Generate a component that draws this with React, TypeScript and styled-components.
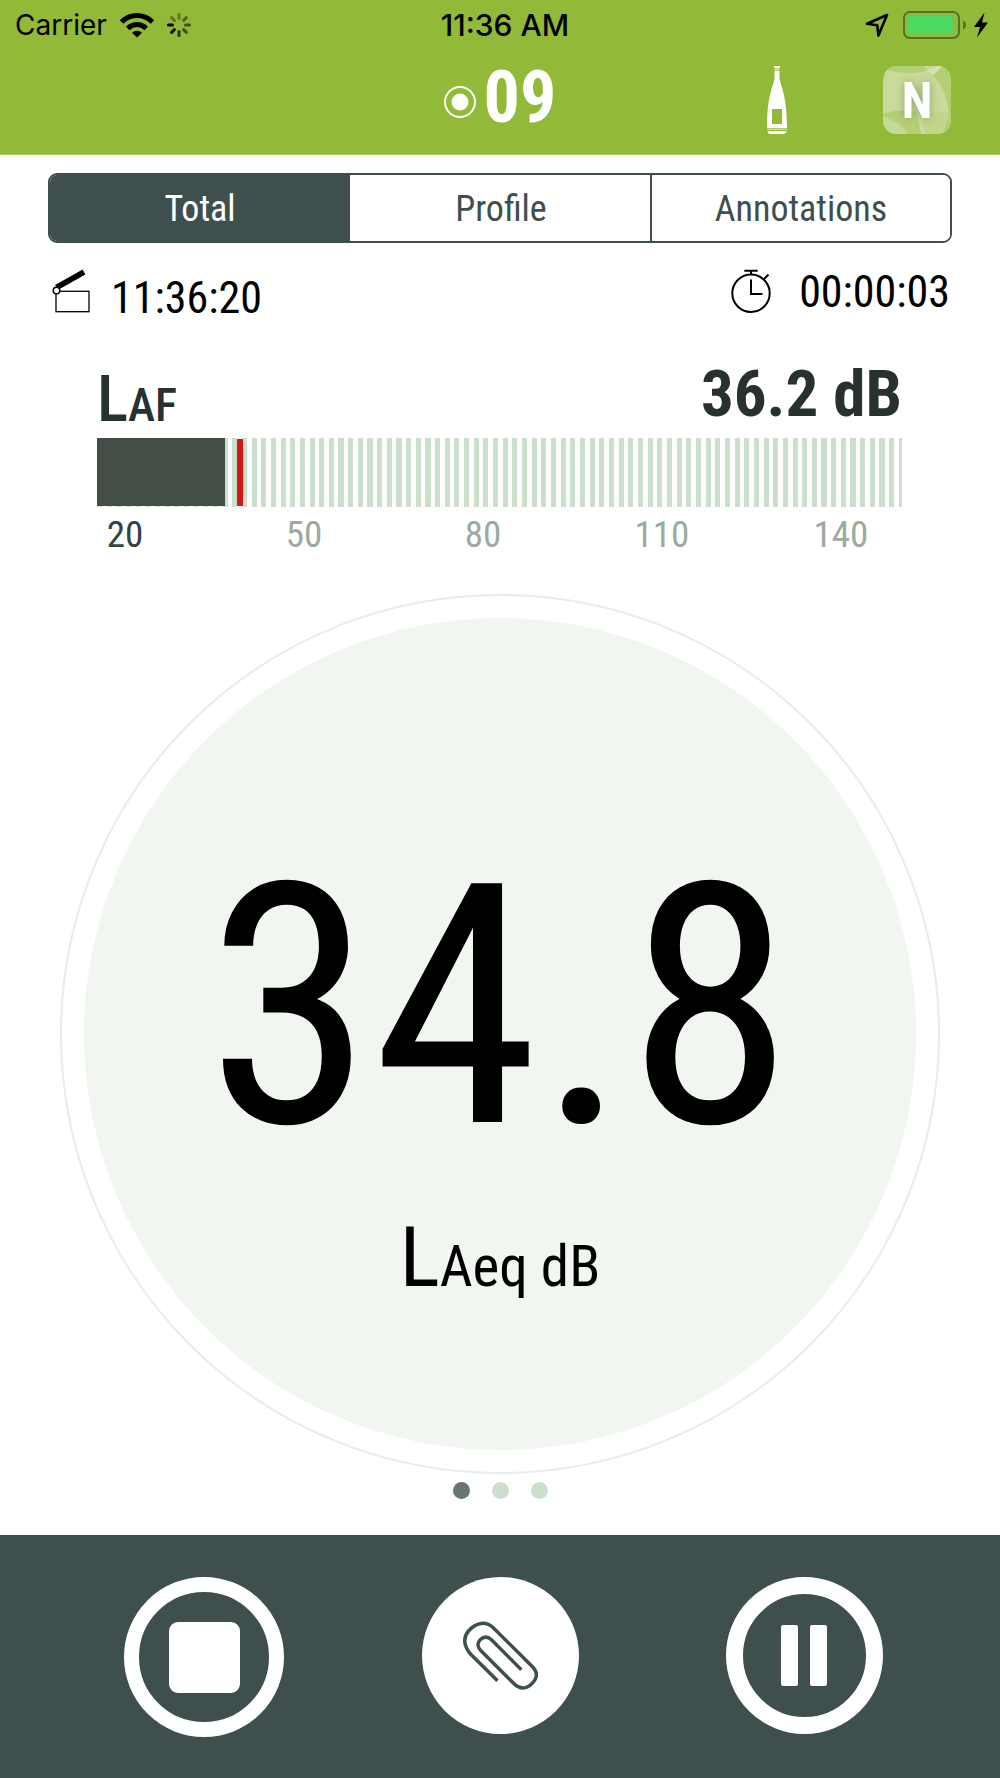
import React, { useState } from 'react';
import styled, { createGlobalStyle } from 'styled-components';

const green = '#92b938';
const slate = '#3f4f4e';
const ink = '#263130';
const display = "'Roboto Condensed', Roboto, sans-serif";
const system = "Inter, 'Liberation Sans', sans-serif";

const GlobalStyle = createGlobalStyle`
  * { box-sizing: border-box; }
  body { margin: 0; background: #fff; }
  button { margin: 0; padding: 0; border: 0; background: none; font: inherit; color: inherit; cursor: pointer; }
  svg { display: block; }
`;

const Screen = styled.div`
  min-height: 100vh;
  display: flex;
  flex-direction: column;
  font-family: ${display};
  color: #000;
`;

const TopArea = styled.header`
  background: ${green};
  border-bottom: 1px solid #acca67;
`;

const StatusBar = styled.div`
  display: grid;
  grid-template-columns: 1fr auto 1fr;
  align-items: center;
  height: 50px;
  padding: 0 11px 0 15px;
  font: 400 28px/50px ${system};
`;

const StatusGroup = styled.div<{ $end?: boolean; $gap: number }>`
  display: flex;
  align-items: center;
  gap: ${p => p.$gap}px;
  justify-content: ${p => (p.$end ? 'flex-end' : 'flex-start')};
`;

const Clock = styled.time`
  padding-left: 6px;
  font-size: 30px;
  font-weight: 500;
`;

const TitleBar = styled.div`
  display: grid;
  grid-template-columns: 1fr auto 1fr;
  height: 104px;
  padding: 0 49px;
`;

const Title = styled.h1`
  grid-column: 2;
  display: flex;
  gap: 8px;
  margin: 0;
  padding-top: 12px;
  color: #fff;
  font-size: 72px;
  font-weight: 700;
  line-height: 72px;
  svg { margin-top: 24px; }
`;

const Actions = styled.div`
  display: flex;
  justify-content: flex-end;
  align-items: flex-start;
  gap: 96px;
  padding-top: 16px;
`;

const AppBadge = styled.button`
  position: relative;
  width: 68px;
  height: 68px;
  border-radius: 13px;
  overflow: hidden;
  svg { position: absolute; inset: 0; }
  span {
    position: relative;
    color: #fff;
    font-size: 50px;
    font-weight: 700;
    line-height: 70px;
    text-shadow: 0 0 8px rgba(80, 100, 50, 0.45);
  }
`;

const Main = styled.main`
  flex: 1;
  padding-top: 18px;
`;

const Tabs = styled.div`
  display: grid;
  grid-template-columns: repeat(3, 1fr);
  margin: 0 48px;
  height: 70px;
  border: 2px solid ${slate};
  border-radius: 9px;
  overflow: hidden;
`;

const Tab = styled.button<{ $active: boolean }>`
  padding-top: 2px;
  background: ${p => (p.$active ? slate : '#fff')};
  color: ${p => (p.$active ? '#fff' : slate)};
  font-size: 36px;
  line-height: 64px;
  & + & { border-left: 2px solid ${slate}; }
  &[aria-selected='true'] + & { border-left-color: transparent; }
`;

const Times = styled.div`
  display: flex;
  justify-content: space-between;
  height: 52px;
  margin: 26px 50px 0 52px;
`;

const TimeItem = styled.div<{ $low?: boolean }>`
  display: flex;
  align-items: flex-start;
  gap: ${p => (p.$low ? 18 : 28)}px;
  time {
    align-self: ${p => (p.$low ? 'flex-end' : 'flex-start')};
    font-size: 44px;
    line-height: 46px;
  }
`;

const Level = styled.section`
  margin: 41px 98px 0 97px;
`;

const LevelHead = styled.div`
  display: flex;
  justify-content: space-between;
  height: 69px;
  margin-bottom: 7px;
  color: ${ink};
  font-size: 65px;
  line-height: 64px;
`;

const LevelName = styled.span`
  align-self: flex-end;
  font-weight: 500;
  small { font-size: 46px; line-height: 46px; }
`;

const Bar = styled.div`
  display: flex;
  height: 69px;
  background: repeating-linear-gradient(to right, #ccdfcd 0 0.63%, #fff 0.63% 1.2%);
`;

const Fill = styled.div`
  background: #434e47;
  height: 68px;
`;

const Peak = styled.div`
  width: 6px;
  margin: 1px 0 1px 12px;
  background: #ce1a17;
`;

const Scale = styled.div`
  display: flex;
  justify-content: space-between;
  margin-top: 8px;
  padding-right: 33px;
  font-size: 37px;
  line-height: 40px;
`;

const Tick = styled.span<{ $active: boolean }>`
  width: 56px;
  text-align: center;
  color: ${p => (p.$active ? '#36423f' : '#9bab9f')};
`;

const Ring = styled.section`
  width: 88%;
  aspect-ratio: 1;
  margin: 39px auto 0;
  padding: 22px;
  border: 2px solid #e2f0e9;
  border-radius: 50%;
`;

const Disc = styled.div`
  height: 100%;
  padding-top: 239px;
  border-radius: 50%;
  background: #f1f6f0;
  text-align: center;
`;

const Reading = styled.output`
  display: block;
  font-size: 336px;
  line-height: 300px;
`;

const Unit = styled.div`
  margin-top: 51px;
  font-size: 84px;
  line-height: 100px;
  small { font-size: 57px; line-height: 57px; }
`;

const Dots = styled.nav`
  display: flex;
  justify-content: center;
  gap: 22px;
  margin: 8px 0 36px;
`;

const Dot = styled.button<{ $active: boolean }>`
  width: 17px;
  height: 17px;
  border-radius: 50%;
  background: ${p => (p.$active ? '#68766d' : '#ccdfcd')};
`;

const Controls = styled.footer`
  display: grid;
  grid-template-columns: 302fr 290fr 318fr;
  justify-items: center;
  align-items: start;
  padding: 42px 37px 41px 53px;
  background: ${slate};
`;

const RoundButton = styled.button<{ $size: number; $ring?: number }>`
  display: flex;
  align-items: center;
  justify-content: center;
  gap: 12px;
  width: ${p => p.$size}px;
  height: ${p => p.$size}px;
  border: ${p => p.$ring ?? 0}px solid #fff;
  border-radius: 50%;
  background: ${p => (p.$ring ? 'transparent' : '#fff')};
`;

const StopMark = styled.span`
  width: 71px;
  height: 71px;
  border-radius: 9px;
  background: #fff;
`;

const PauseMark = styled.span`
  width: 17px;
  height: 61px;
  border-radius: 2px;
  background: #fff;
`;

const WifiIcon = () => (
  <svg width="34" height="25" viewBox="0 0 34 25" fill="none" stroke="#000" strokeWidth="5" aria-hidden="true">
    <path d="M1.6 9A21.5 21.5 0 0 1 32.4 9" />
    <path d="M7.8 15.4A13 13 0 0 1 26.2 15.4" />
    <path d="M17 24.5L12 19.7A7.2 7.2 0 0 1 22 19.7Z" fill="#000" stroke="none" />
  </svg>
);

const spokes = [0.35, 0.45, 0.55, 0.55, 0.7, 0.85, 1, 0.35];

const SpinnerIcon = () => (
  <svg width="24" height="24" viewBox="-12 -12 24 24" stroke="#000" strokeWidth="3" strokeLinecap="round" aria-hidden="true">
    {spokes.map((opacity, i) => (
      <line key={i} y1="-10.5" y2="-6.5" opacity={opacity} transform={`rotate(${i * 45})`} />
    ))}
  </svg>
);

const LocationIcon = () => (
  <svg width="24" height="24" viewBox="0 0 24 24" fill="none" stroke="#000" strokeWidth="2.6" strokeLinejoin="round" aria-hidden="true">
    <path d="M22 2L2 10.8L12.3 12.2L13.4 22.5Z" />
  </svg>
);

const BatteryIcon = () => (
  <svg width="64" height="28" viewBox="0 0 64 28" aria-hidden="true">
    <rect x="1" y="1" width="55" height="26" rx="6" fill="none" stroke="#56712a" strokeWidth="2" />
    <rect x="5" y="5" width="45" height="18" rx="2.5" fill="#4cd964" />
    <path d="M60 9.5Q63 11 63 14T60 18.5Z" fill="#56712a" />
  </svg>
);

const BoltIcon = () => (
  <svg width="16" height="26" viewBox="0 0 16 26" aria-hidden="true">
    <path d="M11.5 0.5L1 15H7L4 25.5L15 10.5H9Z" />
  </svg>
);

const RecordIcon = () => (
  <svg width="32" height="32" viewBox="0 0 32 32" aria-hidden="true">
    <circle cx="16" cy="16" r="15" fill="none" stroke="#fff" strokeWidth="2" />
    <circle cx="16" cy="16" r="8.5" fill="#fff" />
  </svg>
);

const BottleIcon = () => (
  <svg width="20" height="68" viewBox="0 0 20 68" fill="#fff" aria-hidden="true">
    <rect x="7" y="0" width="6" height="2" />
    <rect x="7.5" y="2.7" width="5" height="1" />
    <path fillRule="evenodd" d="M7.5 4.7H12.5V13C15 23 20 32 20 62.3H0C0 32 5 23 7.5 13ZM5 43V58H15V43Z" />
    <rect x="0.2" y="63" width="19.6" height="1" opacity="0.5" />
    <path d="M0.5 65H19.5Q19 68 17 68H3Q1 68 0.5 65Z" />
  </svg>
);

const FacetsIcon = () => (
  <svg width="68" height="68" viewBox="0 0 68 68" fill="#fff" aria-hidden="true">
    <rect width="68" height="68" opacity="0.3" />
    <path d="M4 4Q32 12 54 0H60L50 9Q66 28 66 50L60 68H38L34 48L27 68Q14 54 0 48V16Z" opacity="0.28" />
    <path d="M40 0H60L50 9Z" opacity="0.25" />
    <path d="M0 50Q16 56 25 68H0Z" opacity="0.25" />
    <path d="M0 48Q16 42 34 46L27 68Q18 56 0 48Z" fill={green} opacity="0.35" />
    <path d="M38 48L66 46Q66 58 59 68H42Z" fill={green} opacity="0.14" />
  </svg>
);

const ClapperIcon = () => (
  <svg width="41" height="44" viewBox="0 0 41 44" fill="none" stroke="#000" aria-hidden="true">
    <rect x="4" y="22.3" width="33" height="20.4" strokeWidth="1.3" />
    <path d="M4.5 18.5L32 3" strokeWidth="5.6" />
    <circle cx="4.5" cy="21.5" r="3.3" fill="#fff" strokeWidth="1.5" />
  </svg>
);

const StopwatchIcon = () => (
  <svg width="40" height="44" viewBox="0 0 40 44" fill="none" stroke="#000" strokeWidth="2" aria-hidden="true">
    <circle cx="20" cy="24.3" r="18.7" />
    <path d="M13.3 1.8H26.7M20 2V6M33 10L37.5 5.5M20 10.5V25H31.5" />
  </svg>
);

const PaperclipIcon = () => (
  <svg width="76" height="71" viewBox="0 0 76 71" fill="none" stroke={slate} strokeWidth="3.5" aria-hidden="true">
    <path d="M35.5 60.7L9 34.5C2 27 0.5 18 6.5 11C14 2.5 23.5 0.5 31.5 8L71 47.2C74.5 51 75.5 56 72.5 60.5C66 69.5 58.5 70 52.3 64L18.5 30.2C15 26.5 15.5 22.5 18.2 19.8C21.5 16.5 25.5 16 29.5 19.8L59.3 49.7" />
  </svg>
);

const views = ['Total', 'Profile', 'Annotations'];
const ticks = [20, 50, 80, 110, 140];
const pages = ['Page 1', 'Page 2', 'Page 3'];

export default function App() {
  const [view, setView] = useState(0);
  const [page, setPage] = useState(0);
  const level = 36.2;

  return (
    <Screen>
      <GlobalStyle />
      <TopArea>
        <StatusBar>
          <StatusGroup $gap={13}>
            <span>Carrier</span>
            <WifiIcon />
            <SpinnerIcon />
          </StatusGroup>
          <Clock>11:36 AM</Clock>
          <StatusGroup $end $gap={14}>
            <LocationIcon />
            <StatusGroup $gap={6}>
              <BatteryIcon />
              <BoltIcon />
            </StatusGroup>
          </StatusGroup>
        </StatusBar>
        <TitleBar>
          <Title><RecordIcon />09</Title>
          <Actions>
            <button type="button" aria-label="Bottle"><BottleIcon /></button>
            <AppBadge type="button"><FacetsIcon /><span>N</span></AppBadge>
          </Actions>
        </TitleBar>
      </TopArea>

      <Main>
        <Tabs role="tablist">
          {views.map((name, i) => (
            <Tab key={name} type="button" role="tab" aria-selected={view === i} $active={view === i} onClick={() => setView(i)}>
              {name}
            </Tab>
          ))}
        </Tabs>

        <Times>
          <TimeItem $low><ClapperIcon /><time>11:36:20</time></TimeItem>
          <TimeItem><StopwatchIcon /><time>00:00:03</time></TimeItem>
        </Times>

        <Level>
          <LevelHead>
            <LevelName>L<small>AF</small></LevelName>
            <strong>{level} dB</strong>
          </LevelHead>
          <Bar role="meter" aria-label="Sound level" aria-valuemin={15} aria-valuemax={150} aria-valuenow={level}>
            <Fill style={{ width: `${((level - 14.8) / 135) * 100}%` }} />
            <Peak />
          </Bar>
          <Scale>
            {ticks.map(t => <Tick key={t} $active={t <= level}>{t}</Tick>)}
          </Scale>
        </Level>

        <Ring>
          <Disc>
            <Reading>34.8</Reading>
            <Unit>L<small>Aeq dB</small></Unit>
          </Disc>
        </Ring>

        <Dots aria-label="Readings">
          {pages.map((name, i) => (
            <Dot key={name} type="button" aria-label={name} $active={page === i} onClick={() => setPage(i)} />
          ))}
        </Dots>
      </Main>

      <Controls>
        <RoundButton type="button" aria-label="Stop" $size={160} $ring={15}><StopMark /></RoundButton>
        <RoundButton type="button" aria-label="Attach" $size={157}><PaperclipIcon /></RoundButton>
        <RoundButton type="button" aria-label="Pause" $size={157} $ring={17}><PauseMark /><PauseMark /></RoundButton>
      </Controls>
    </Screen>
  );
}
